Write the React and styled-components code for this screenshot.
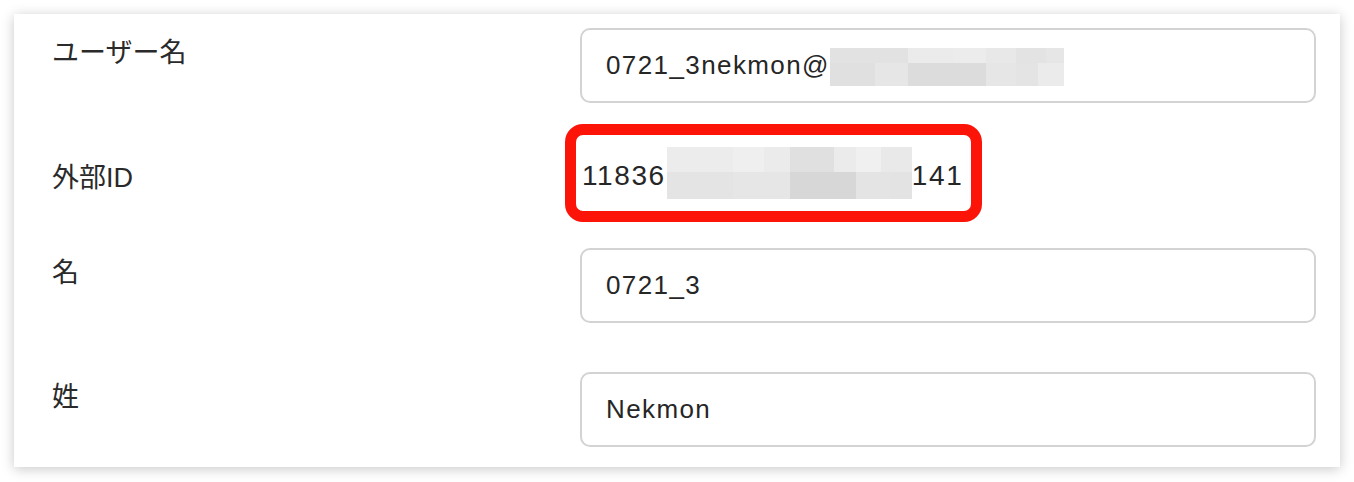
import React from "react";
import styled, { createGlobalStyle } from "styled-components";

const GlobalStyle = createGlobalStyle`
  html, body {
    margin: 0;
    padding: 0;
    background: #ffffff;
  }
  body {
    font-family: "Liberation Sans", "Noto Sans CJK JP", sans-serif;
    color: #262626;
  }
`;

const Page = styled.div`
  padding: 14px;
`;

const Card = styled.div`
  background: #ffffff;
  box-shadow: 0 2px 12px rgba(0, 0, 0, 0.22);
  padding: 14px 24px 20px 38px;
  height: 453px;
  box-sizing: border-box;
  display: flex;
  flex-direction: column;
  gap: 49px;
`;

const Row = styled.div`
  display: grid;
  grid-template-columns: 528px 736px;
  align-items: ${({ $center }) => ($center ? "center" : "start")};
  min-height: ${({ $height }) => ($height ? `${$height}px` : "auto")};
`;

const Label = styled.div`
  font-family: "Liberation Sans", "Noto Sans CJK JP", sans-serif;
  font-size: 27px;
  line-height: 30px;
  color: #2a2a2a;
  padding-top: ${({ $top }) => $top}px;
`;

const FieldBox = styled.div`
  height: 75px;
  box-sizing: border-box;
  border: 2px solid #d3d3d3;
  border-radius: 10px;
  padding: 0 24px;
  display: flex;
  align-items: center;
`;

const Text = styled.span`
  font-size: ${({ $size }) => $size || 26}px;
  letter-spacing: ${({ $spacing }) => $spacing || 1.4}px;
  color: #262626;
  white-space: nowrap;
`;

const Value = styled.div`
  position: relative;
  height: 47px;
  padding-left: 2px;
  display: flex;
  align-items: center;
`;

const Highlight = styled.div`
  position: absolute;
  left: -15px;
  top: -28px;
  width: 417px;
  height: 98px;
  box-sizing: border-box;
  border: 11px solid #fd1408;
  border-radius: 18px;
  pointer-events: none;
`;

const MosaicSvg = styled.svg`
  display: block;
  flex-shrink: 0;
  margin: ${({ $margin }) => $margin || "0"};
`;

// pixelated cover over hidden parts of a value
const Mosaic = ({ width, height, cells, margin }) => (
  <MosaicSvg
    $margin={margin}
    width={width}
    height={height}
    viewBox={`0 0 ${width} ${height}`}
    shapeRendering="crispEdges"
  >
    {cells.map(([x, y, w, h, c], i) => (
      <rect key={i} x={x} y={y} width={w} height={h} fill={c} />
    ))}
  </MosaicSvg>
);

const mailCells = [
  [0, 0, 78, 15, "#e2e2e2"],
  [78, 0, 45, 15, "#ebebeb"],
  [123, 0, 33, 15, "#ececec"],
  [156, 0, 30, 15, "#e8e8e8"],
  [186, 0, 30, 15, "#e3e3e3"],
  [216, 0, 18, 15, "#e6e6e6"],
  [0, 15, 45, 23, "#e0e0e0"],
  [45, 15, 33, 23, "#e6e6e6"],
  [78, 15, 78, 23, "#dcdcdc"],
  [156, 15, 30, 23, "#e6e6e6"],
  [186, 15, 22, 23, "#e4e4e4"],
  [208, 15, 26, 23, "#ebebeb"],
];

const idCells = [
  [0, 0, 66, 25, "#ececec"],
  [66, 0, 31, 25, "#efefef"],
  [97, 0, 26, 25, "#ebebeb"],
  [123, 0, 44, 25, "#e0e0e0"],
  [167, 0, 22, 25, "#ebebeb"],
  [189, 0, 25, 25, "#f0f0f0"],
  [214, 0, 31, 25, "#e9e9e9"],
  [0, 25, 66, 27, "#e4e4e4"],
  [66, 25, 57, 27, "#e6e6e6"],
  [123, 25, 66, 27, "#d7d7d7"],
  [189, 25, 34, 27, "#e4e4e4"],
  [223, 25, 22, 27, "#e3e3e3"],
];

export default function App() {
  return (
    <>
      <GlobalStyle />
      <Page>
        <Card>
          <Row>
            <Label $top={10}>ユーザー名</Label>
            <FieldBox>
              <Text>0721_3nekmon@</Text>
              <Mosaic width={234} height={38} cells={mailCells} margin="3px 0 0 0" />
            </FieldBox>
          </Row>
          <Row $center $height={47}>
            <Label $top={4}>外部ID</Label>
            <Value>
              <Text $size={28} $spacing={1.6}>11836</Text>
              <Mosaic width={245} height={52} cells={idCells} margin="-5px 0 0 1px" />
              <Text $size={28} $spacing={1.6}>141</Text>
              <Highlight />
            </Value>
          </Row>
          <Row>
            <Label $top={10}>名</Label>
            <FieldBox>
              <Text>0721_3</Text>
            </FieldBox>
          </Row>
          <Row>
            <Label $top={10}>姓</Label>
            <FieldBox>
              <Text>Nekmon</Text>
            </FieldBox>
          </Row>
        </Card>
      </Page>
    </>
  );
}
